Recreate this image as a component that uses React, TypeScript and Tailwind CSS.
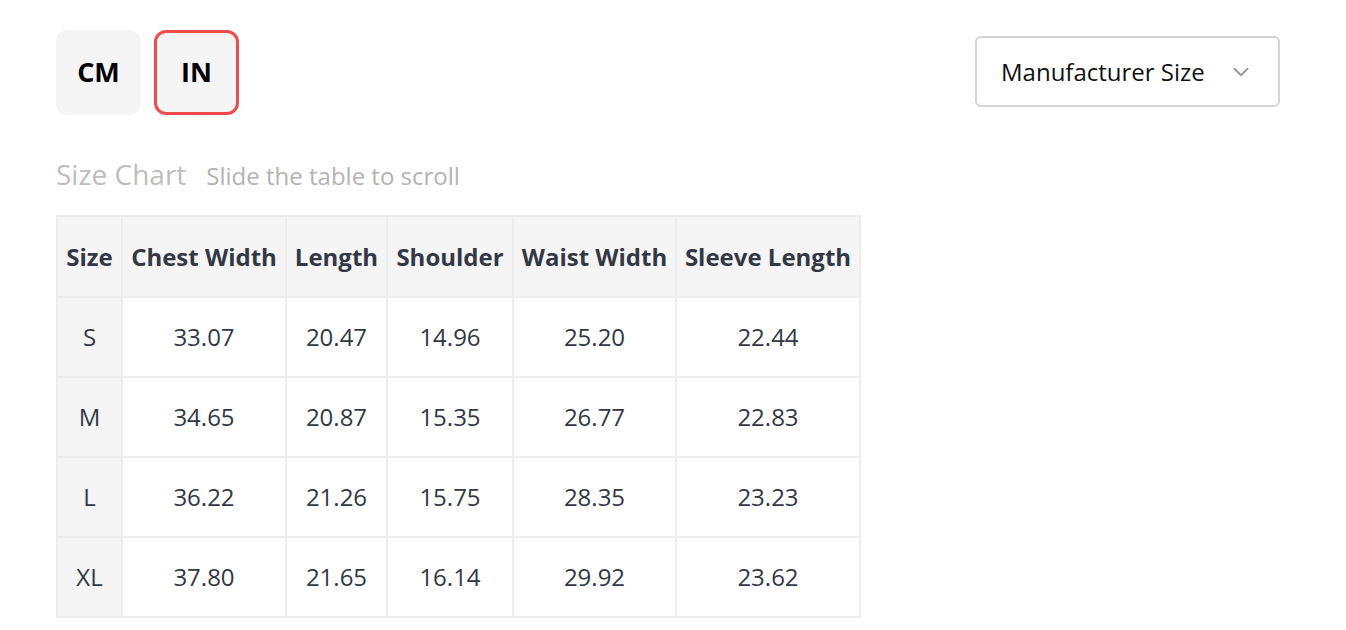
import { ChevronDown } from 'lucide-react';

const columns = [
  { label: 'Size', w: 'w-[65px]' },
  { label: 'Chest Width', w: 'w-[164px]' },
  { label: 'Length', w: 'w-[101px]' },
  { label: 'Shoulder', w: 'w-[126px]' },
  { label: 'Waist Width', w: 'w-[163px]' },
  { label: 'Sleeve Length', w: 'w-[184px]' },
];

const rows = [
  ['S', '33.07', '20.47', '14.96', '25.20', '22.44'],
  ['M', '34.65', '20.87', '15.35', '26.77', '22.83'],
  ['L', '36.22', '21.26', '15.75', '28.35', '23.23'],
  ['XL', '37.80', '21.65', '16.14', '29.92', '23.62'],
];

export default function App() {
  return (
    <div className="w-[1346px] h-[630px] bg-white pl-[56px] pr-[66px] pt-[30px] font-['Open_Sans',sans-serif] overflow-hidden">
      <div className="flex justify-between items-start">
        <div className="flex gap-[13px]">
          <button className="w-[85px] h-[85px] rounded-[12px] bg-[#f5f5f5] text-[27px] font-bold text-black">CM</button>
          <button className="w-[85px] h-[85px] rounded-[12px] bg-[#f5f5f5] border-[3px] border-[#f24b4b] text-[27px] font-bold text-black">IN</button>
        </div>
        <div className="mt-[6px] w-[305px] h-[71px] border-2 border-[#d4d4d4] rounded-[6px] flex items-center justify-between pl-[24px] pr-[24px]">
          <span className="text-[24px] text-[#111]">Manufacturer Size</span>
          <ChevronDown className="w-[26px] h-[26px] text-[#999]" strokeWidth={1.75} />
        </div>
      </div>

      <div className="mt-[38px] flex items-baseline gap-[20px]">
        <span className="text-[28px] text-[#bdbdbd]">Size Chart</span>
        <span className="text-[24px] text-[#b3b3b3]">Slide the table to scroll</span>
      </div>

      <table className="mt-[20px] border-collapse border-2 border-[#ececec] text-[24px]">
        <thead>
          <tr className="h-[81px] bg-[#f5f5f5]">
            {columns.map((c) => (
              <th key={c.label} className={`${c.w} border-2 border-[#ececec] font-bold text-[#333844] px-0 text-center`}>
                {c.label}
              </th>
            ))}
          </tr>
        </thead>
        <tbody>
          {rows.map((r) => (
            <tr key={r[0]} className="h-[80px]">
              {r.map((v, i) => (
                <td
                  key={i}
                  className={`border-2 border-[#ececec] text-center text-[#333844] ${i === 0 ? 'bg-[#f5f5f5]' : 'bg-white'}`}
                >
                  {v}
                </td>
              ))}
            </tr>
          ))}
        </tbody>
      </table>
    </div>
  );
}
